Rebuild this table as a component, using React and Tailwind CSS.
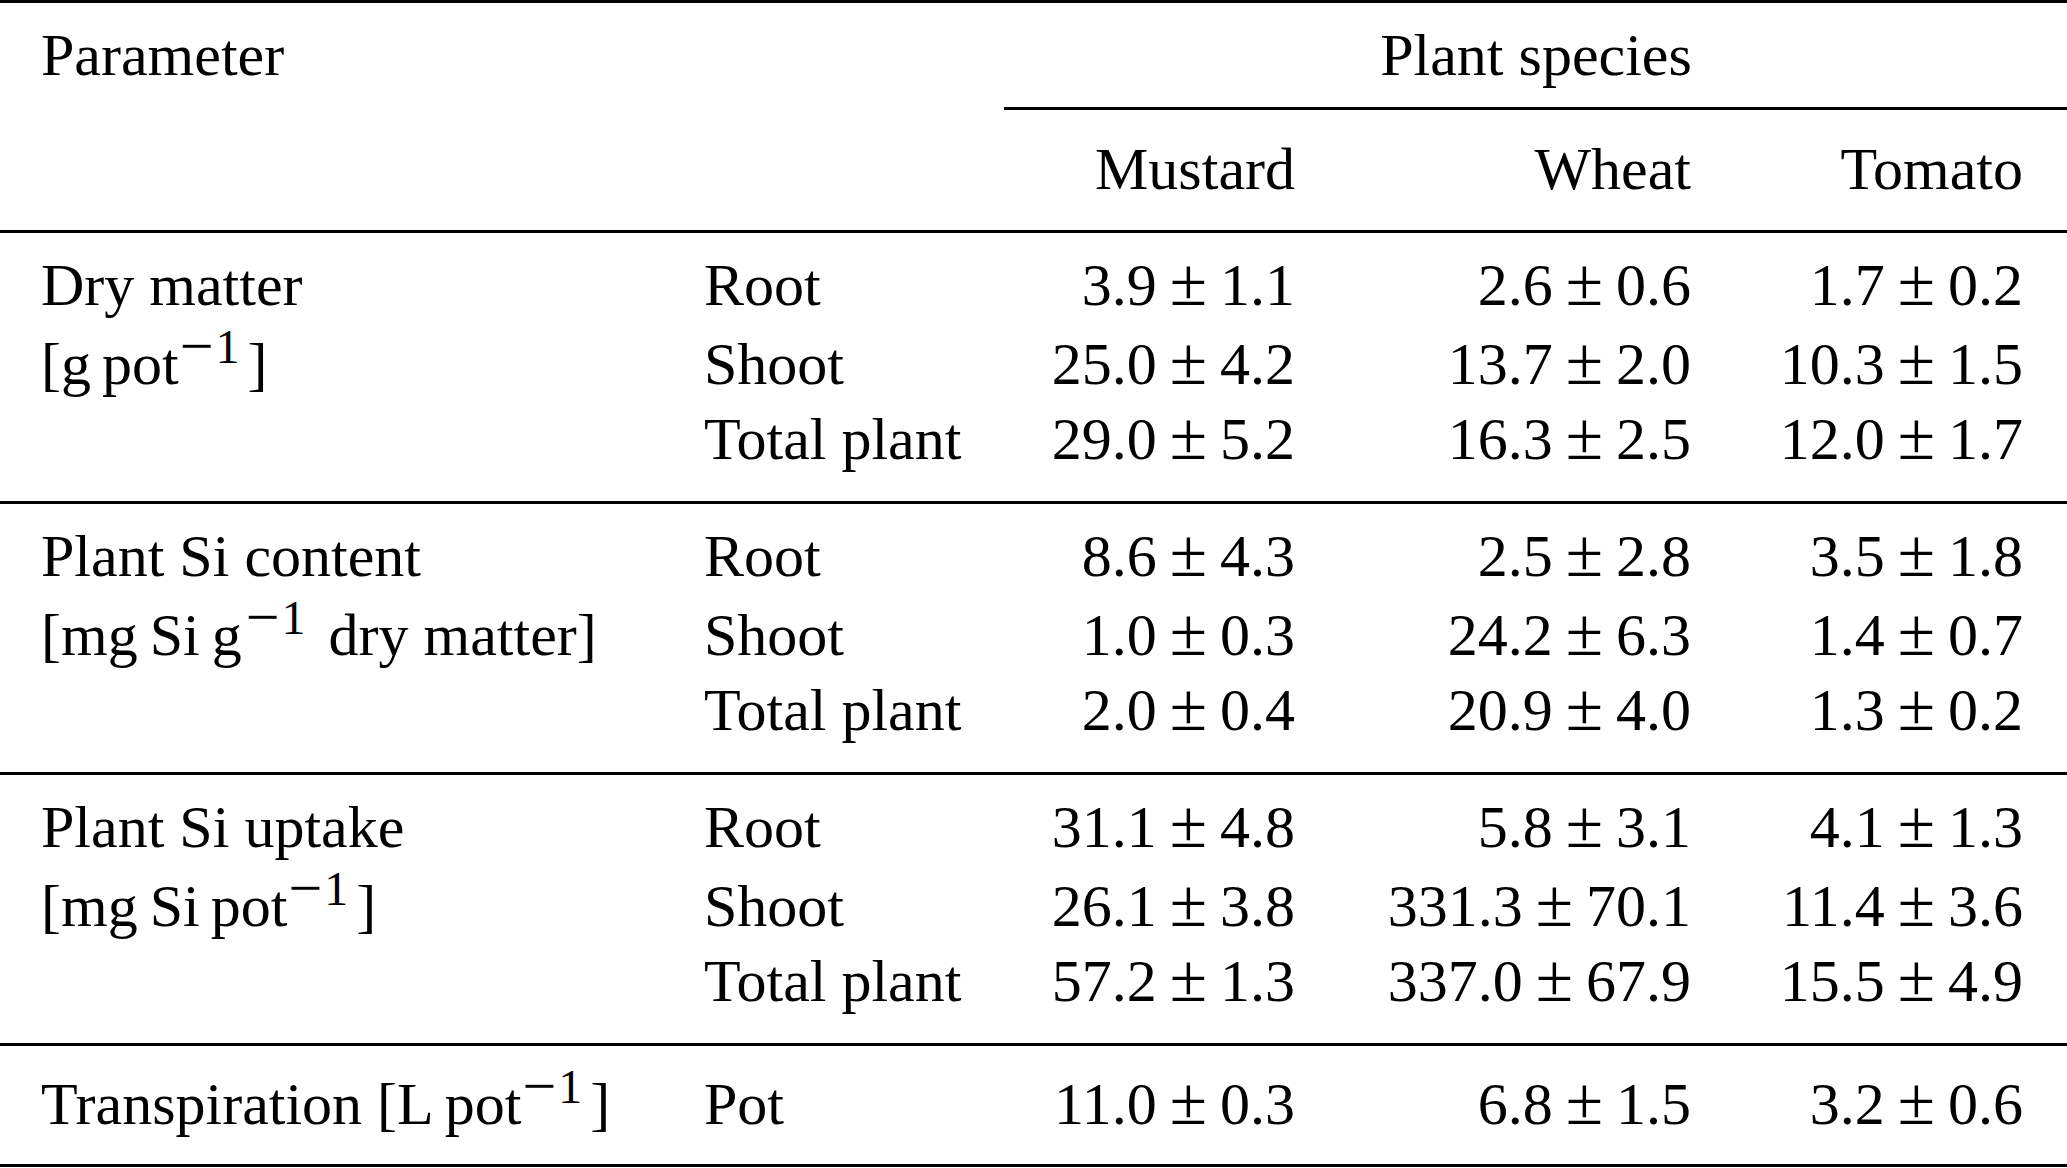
import React from "react";

const COLS = "grid grid-cols-[660px_345px_334px_396px_332px]";

function Sup({ gap = "ml-[1px]" }) {
  return (
    <>
      <span className={`relative -top-[18px] text-[60px] leading-[0px] ${gap}`}>−</span>
      <span className="relative -top-[21px] text-[48px] leading-[0px] ml-[2px] mr-[8px]">1</span>
    </>
  );
}

function Val({ a, b }) {
  return (
    <span className="whitespace-nowrap">
      {a}
      <span className="mx-[13px] text-[68px] leading-[0px]">±</span>
      {b}
    </span>
  );
}

const groups = [
  {
    l1: "Dry matter",
    l2: (
      <>
        [g<span className="ml-[11px]">pot</span>
        <Sup />]
      </>
    ),
    rows: [
      ["Root", "3.9", "1.1", "2.6", "0.6", "1.7", "0.2"],
      ["Shoot", "25.0", "4.2", "13.7", "2.0", "10.3", "1.5"],
      ["Total plant", "29.0", "5.2", "16.3", "2.5", "12.0", "1.7"],
    ],
  },
  {
    l1: "Plant Si content",
    l2: (
      <>
        [mg<span className="ml-[12px]">Si</span>
        <span className="ml-[12px]">g</span>
        <Sup gap="ml-[4px]" /> dry matter]
      </>
    ),
    rows: [
      ["Root", "8.6", "4.3", "2.5", "2.8", "3.5", "1.8"],
      ["Shoot", "1.0", "0.3", "24.2", "6.3", "1.4", "0.7"],
      ["Total plant", "2.0", "0.4", "20.9", "4.0", "1.3", "0.2"],
    ],
  },
  {
    l1: "Plant Si uptake",
    l2: (
      <>
        [mg<span className="ml-[12px]">Si</span>
        <span className="ml-[11px]">pot</span>
        <Sup />]
      </>
    ),
    rows: [
      ["Root", "31.1", "4.8", "5.8", "3.1", "4.1", "1.3"],
      ["Shoot", "26.1", "3.8", "331.3", "70.1", "11.4", "3.6"],
      ["Total plant", "57.2", "1.3", "337.0", "67.9", "15.5", "4.9"],
    ],
  },
];

const rowCls = [
  "h-[76px] leading-[76px]",
  "h-[79px] pt-[3px] leading-[76px]",
  "h-[74px] leading-[74px]",
];

function Rule() {
  return <div className="h-[3px] bg-black" />;
}

export default function App() {
  return (
    <div className="w-[2067px] h-[1168px] bg-white text-black text-[60px] font-['Liberation_Serif','Times_New_Roman',serif] overflow-hidden">
      <Rule />
      <div className="flex h-[104px] leading-[104px]">
        <div className="w-[1005px] pl-[41px]">Parameter</div>
        <div className="flex-1 text-center">Plant species</div>
      </div>
      <div className="flex">
        <div className="w-[1004px]" />
        <div className="flex-1 h-[3px] bg-black" />
      </div>
      <div className={`${COLS} h-[120px] leading-[118px]`}>
        <div />
        <div />
        <div className="text-right pr-[44px]">Mustard</div>
        <div className="text-right pr-[44px]">Wheat</div>
        <div className="text-right pr-[44px]">Tomato</div>
      </div>
      <Rule />
      {groups.map((g, gi) => (
        <React.Fragment key={gi}>
          <div className="pt-[14px] pb-[25px]">
            {g.rows.map((r, ri) => (
              <div key={ri} className={`${COLS} ${rowCls[ri]}`}>
                <div className="pl-[41px] whitespace-nowrap">
                  {ri === 0 ? g.l1 : ri === 1 ? g.l2 : null}
                </div>
                <div className="pl-[44px] whitespace-nowrap">{r[0]}</div>
                <div className="text-right pr-[44px]">
                  <Val a={r[1]} b={r[2]} />
                </div>
                <div className="text-right pr-[44px]">
                  <Val a={r[3]} b={r[4]} />
                </div>
                <div className="text-right pr-[44px]">
                  <Val a={r[5]} b={r[6]} />
                </div>
              </div>
            ))}
          </div>
          <Rule />
        </React.Fragment>
      ))}
      <div className="pt-[20px] pb-[22px]">
        <div className={`${COLS} h-[76px] leading-[76px]`}>
          <div className="pl-[41px] whitespace-nowrap">
            Transpiration [L<span className="ml-[11px]">pot</span>
            <Sup />]
          </div>
          <div className="pl-[44px]">Pot</div>
          <div className="text-right pr-[44px]">
            <Val a="11.0" b="0.3" />
          </div>
          <div className="text-right pr-[44px]">
            <Val a="6.8" b="1.5" />
          </div>
          <div className="text-right pr-[44px]">
            <Val a="3.2" b="0.6" />
          </div>
        </div>
      </div>
      <Rule />
    </div>
  );
}
